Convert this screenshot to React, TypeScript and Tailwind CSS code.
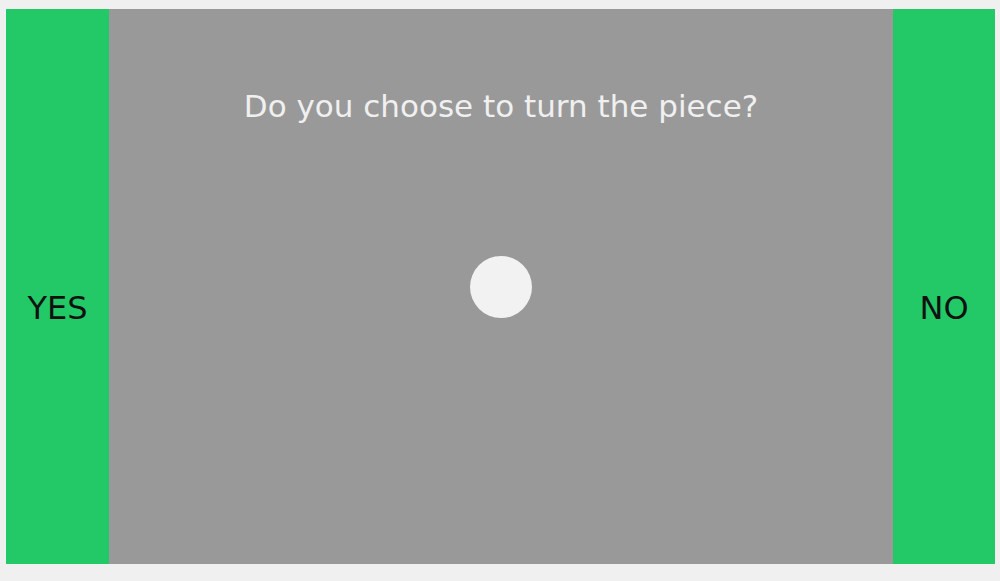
import React from "react";

export default function App() {
  return (
    <div className="w-[1000px] h-[581px] bg-[#f0f0f0] pt-[9px] pl-[6px]" style={{ fontFamily: '"DejaVu Sans", Verdana, sans-serif' }}>
      <div className="flex w-[989px] h-[555px]">
        <div className="w-[103px] bg-[#23c966] flex items-center justify-center pt-[42px]">
          <span className="text-[32px] leading-[40px] text-[#111]">YES</span>
        </div>
        <div className="flex-1 bg-[#999999] grid grid-rows-[1fr_auto_1fr] justify-items-center">
          <div className="pt-[78px] text-[31px] leading-[38px] text-[#f0f0f0]">Do you choose to turn the piece?</div>
          <div className="w-[62px] h-[62px] rounded-full bg-[#f2f2f2]" />
          <div />
        </div>
        <div className="w-[102px] bg-[#23c966] flex items-center justify-center pt-[42px]">
          <span className="text-[32px] leading-[40px] text-[#111]">NO</span>
        </div>
      </div>
    </div>
  );
}
